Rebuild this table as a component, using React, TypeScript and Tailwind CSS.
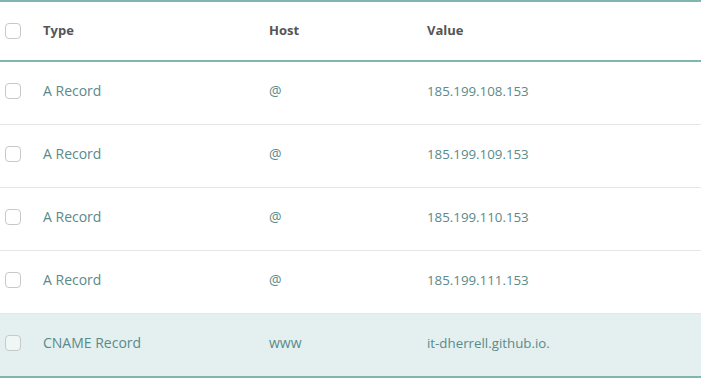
import React from "react";

const rows = [
  { type: "A Record", host: "@", value: "185.199.108.153" },
  { type: "A Record", host: "@", value: "185.199.109.153" },
  { type: "A Record", host: "@", value: "185.199.110.153" },
  { type: "A Record", host: "@", value: "185.199.111.153" },
  { type: "CNAME Record", host: "www", value: "it-dherrell.github.io.", hl: true },
];

function Box() {
  return <div className="w-4 h-4 rounded-[4px] border border-[#c8c8c8] bg-white/40 shrink-0" />;
}

export default function App() {
  return (
    <div className="w-[701px] h-[385px] bg-white" style={{ fontFamily: "'Open Sans', Lato, sans-serif" }}>
      <div className="border-t-2 border-b-2 border-[#7fb6b1]">
        <div className="flex items-center h-[60px] border-b-2 border-[#7fb6b1] text-[13px] font-bold text-[#555555]">
          <div className="w-[43px] pl-[5px] flex items-center"><Box /></div>
          <div className="w-[226px]">Type</div>
          <div className="w-[158px]">Host</div>
          <div>Value</div>
        </div>
        {rows.map((r, i) => (
          <div
            key={i}
            className={`flex items-center pb-1 ${i < rows.length - 1 ? "h-[63px] border-b border-[#e6e6e6]" : "h-[62px]"} text-[#5a8a89] ${r.hl ? "bg-[#e4f0f0]" : ""}`}
          >
            <div className="w-[43px] pl-[5px] flex items-center"><Box /></div>
            <div className="w-[226px] text-[14px] leading-[20px] -mt-px">{r.type}</div>
            <div className="w-[158px] text-[14px] leading-[20px] -mt-px">{r.host}</div>
            <div className="text-[13.3px] leading-[20px]">{r.value}</div>
          </div>
        ))}
      </div>
    </div>
  );
}
